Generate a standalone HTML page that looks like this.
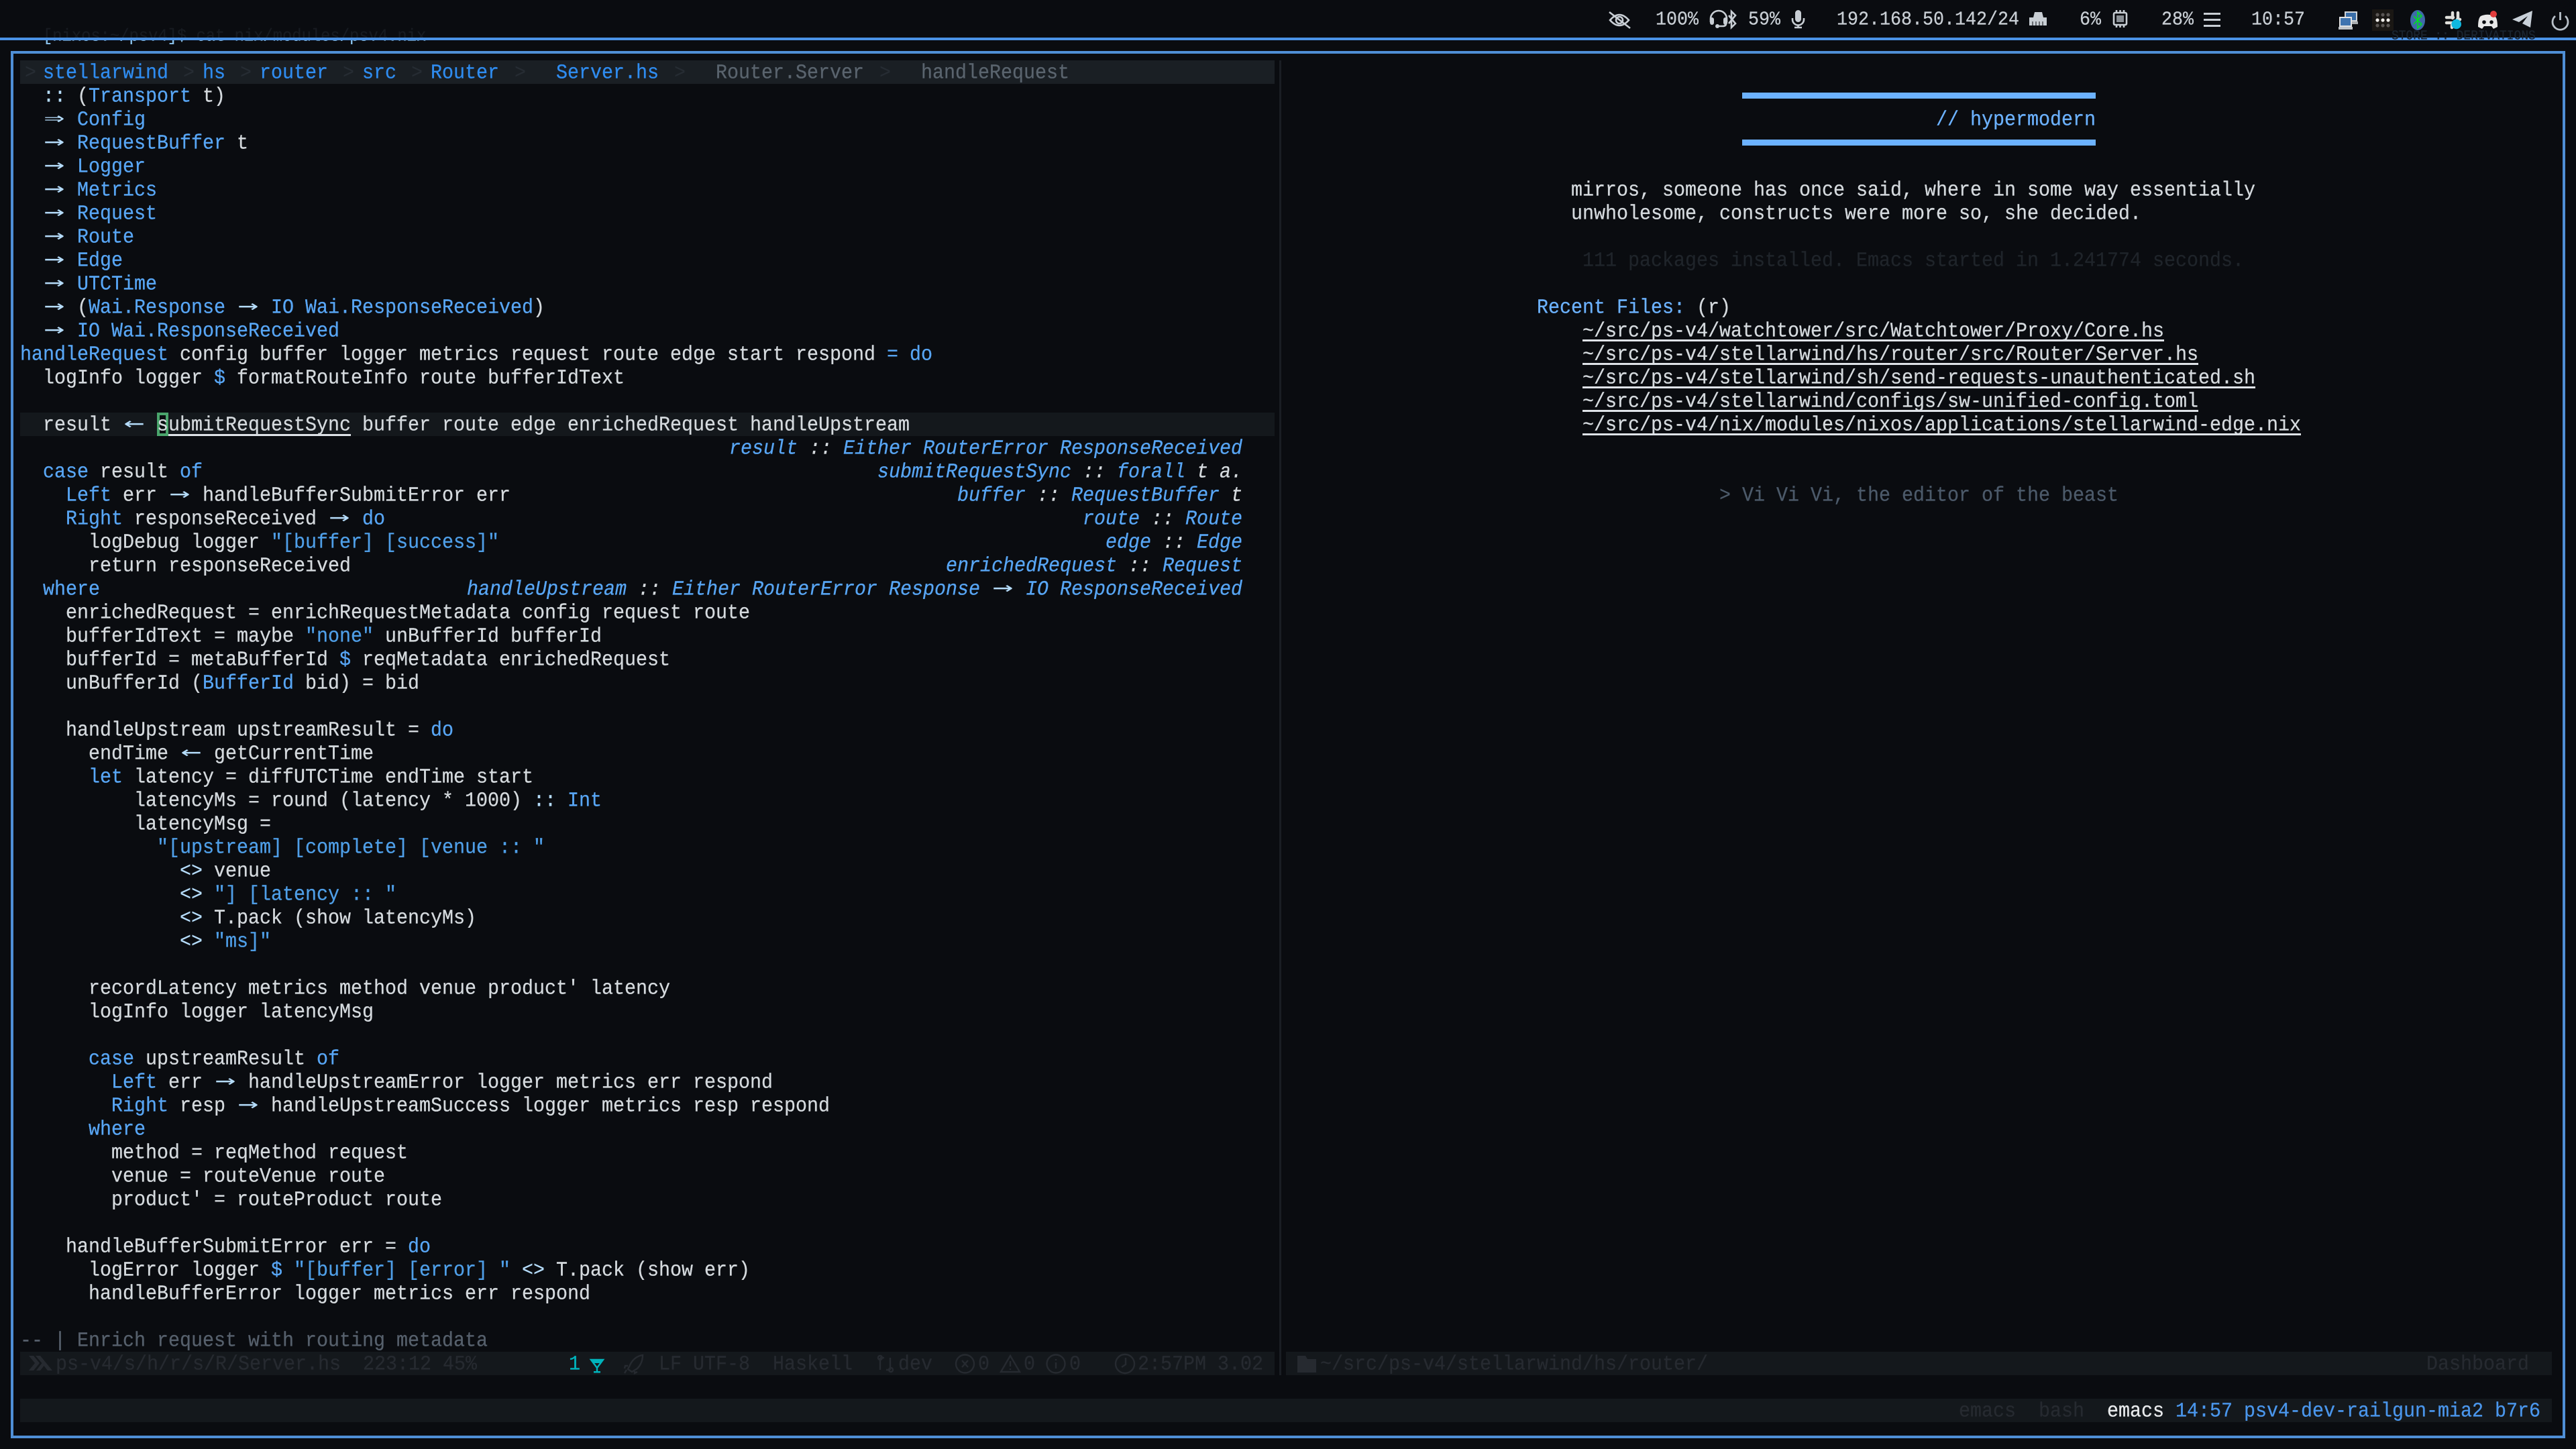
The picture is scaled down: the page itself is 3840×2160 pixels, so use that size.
<!DOCTYPE html>
<html><head><meta charset="utf-8"><style>
html,body{margin:0;padding:0;background:#0a0c10;width:3840px;height:2160px;overflow:hidden}
body{position:relative;font-family:"Liberation Mono","DejaVu Sans Mono",monospace;font-size:28.3333px;line-height:35px;color:#d5dade;text-rendering:geometricPrecision;font-kerning:none;font-variant-ligatures:none;-webkit-text-stroke:.25px currentColor}
.p{position:absolute;white-space:pre;height:35px;line-height:35px;transform:translateY(1px) scaleY(1.08)}
.bx{position:absolute}
.b{color:#58a6f5}
.s{color:#4f9fe8}
.o{color:#b5dcfa}
.a{display:inline-block;width:34px;line-height:0;vertical-align:baseline;text-align:center;font-family:"DejaVu Sans Mono",monospace;transform:translateY(-1px) scaleX(1.8);color:#b5dcfa;font-style:normal;-webkit-text-stroke:0}
#code{position:absolute;left:30px;top:125px;white-space:normal}
#code div{height:35px;white-space:pre;transform:translateY(1px) scaleY(1.08)}
#hint{position:absolute;right:1988px;top:125px;white-space:normal;text-align:right;font-style:italic;color:#58a6f5}
#hint div{height:35px;white-space:pre;transform:translateY(1px) scaleY(1.08)}
#hint i{color:#d5dade}
.dim{color:#262a30}
.crumb{color:#2f8cf0}
.sep{color:#262c33}
.g{color:#5a646e}
.tb{position:absolute;top:13px;height:35px;line-height:35px;font-size:26.6667px;color:#c8ced4;white-space:pre;transform:scaleY(1.08)}
svg{position:absolute;left:0;top:0}
</style></head><body>

<div class="p" style="left:64px;top:36px;font-size:23.8px;color:#171b21">[nixos:~/psv4]$ cat nix/modules/psv4.nix</div>
<div class="bx" style="left:0;top:60px;width:800px;height:6px;overflow:hidden"><div class="p" style="left:64px;top:-24px;font-size:23.8px;color:#8cc4ee">[nixos:~/psv4]$ cat nix/modules/psv4.nix</div></div>
<div class="bx" style="left:0;top:56px;width:3840px;height:4px;background:#4a92e6"></div>
<div class="p" style="left:3565px;top:37px;font-size:17.9px;color:#1b2530;transform:scaleY(1.1)">STORE :: DERIVATIONS</div>

<div class="bx" style="left:16px;top:76px;width:3800px;height:2060px;border:4px solid #4f8fd6"></div>

<div class="tb" style="left:2468px">100%</div>
<div class="tb" style="left:2606px">59%</div>
<div class="tb" style="left:2738px">192.168.50.142/24</div>
<div class="tb" style="left:3100px">6%</div>
<div class="tb" style="left:3222px">28%</div>
<div class="tb" style="left:3356px">10:57</div>

<!-- header -->
<div class="bx" style="left:30px;top:90px;width:1870px;height:35px;background:#1a1f24"></div>
<div class="p crumb" style="left:64px;top:90px">stellarwind</div>
<div class="p crumb" style="left:302px;top:90px">hs</div>
<div class="p crumb" style="left:387px;top:90px">router</div>
<div class="p crumb" style="left:540px;top:90px">src</div>
<div class="p crumb" style="left:642px;top:90px">Router</div>
<div class="p crumb" style="left:829px;top:90px">Server.hs</div>
<div class="p g" style="left:1067px;top:90px">Router.Server</div>
<div class="p g" style="left:1373px;top:90px">handleRequest</div>
<div class="p sep" style="left:37px;top:90px">&gt;</div>
<div class="p sep" style="left:273px;top:90px">&gt;</div>
<div class="p sep" style="left:358px;top:90px">&gt;</div>
<div class="p sep" style="left:511px;top:90px">&gt;</div>
<div class="p sep" style="left:613px;top:90px">&gt;</div>
<div class="p sep" style="left:767px;top:90px">&gt;</div>
<div class="p sep" style="left:1005px;top:90px">&gt;</div>
<div class="p sep" style="left:1311px;top:90px">&gt;</div>

<!-- current line -->
<div class="bx" style="left:30px;top:615px;width:1870px;height:35px;background:#14181c"></div>
<div class="bx" style="left:234px;top:615px;width:17px;height:35px;background:#4aa56c"></div>
<div class="bx" style="left:238px;top:619px;width:9px;height:27px;background:#0a0e10"></div>
<div class="bx" style="left:251px;top:647px;width:272px;height:3px;background:#dfe3e8"></div>

<div id="code">
<div>  <span class="o">::</span> (<span class="b">Transport</span> t)</div>
<div>  <span class="a">⇒</span> <span class="b">Config</span></div>
<div>  <span class="a">→</span> <span class="b">RequestBuffer</span> t</div>
<div>  <span class="a">→</span> <span class="b">Logger</span></div>
<div>  <span class="a">→</span> <span class="b">Metrics</span></div>
<div>  <span class="a">→</span> <span class="b">Request</span></div>
<div>  <span class="a">→</span> <span class="b">Route</span></div>
<div>  <span class="a">→</span> <span class="b">Edge</span></div>
<div>  <span class="a">→</span> <span class="b">UTCTime</span></div>
<div>  <span class="a">→</span> (<span class="b">Wai.Response</span> <span class="a">→</span> <span class="b">IO Wai.ResponseReceived</span>)</div>
<div>  <span class="a">→</span> <span class="b">IO Wai.ResponseReceived</span></div>
<div><span class="b">handleRequest</span> config buffer logger metrics request route edge start respond <span class="b">=</span> <span class="b">do</span></div>
<div>  logInfo logger <span class="b">$</span> formatRouteInfo route bufferIdText</div>
<div> </div>
<div>  result <span class="a">←</span> submitRequestSync buffer route edge enrichedRequest handleUpstream</div>
<div> </div>
<div>  <span class="b">case</span> result <span class="b">of</span></div>
<div>    <span class="b">Left</span> err <span class="a">→</span> handleBufferSubmitError err</div>
<div>    <span class="b">Right</span> responseReceived <span class="a">→</span> <span class="b">do</span></div>
<div>      logDebug logger <span class="s">"[buffer] [success]"</span></div>
<div>      return responseReceived</div>
<div>  <span class="b">where</span></div>
<div>    enrichedRequest = enrichRequestMetadata config request route</div>
<div>    bufferIdText = maybe <span class="s">"none"</span> unBufferId bufferId</div>
<div>    bufferId = metaBufferId <span class="b">$</span> reqMetadata enrichedRequest</div>
<div>    unBufferId (<span class="b">BufferId</span> bid) = bid</div>
<div> </div>
<div>    handleUpstream upstreamResult = <span class="b">do</span></div>
<div>      endTime <span class="a">←</span> getCurrentTime</div>
<div>      <span class="b">let</span> latency = diffUTCTime endTime start</div>
<div>          latencyMs = round (latency * 1000) <span class="o">::</span> <span class="b">Int</span></div>
<div>          latencyMsg =</div>
<div>            <span class="s">"[upstream] [complete] [venue :: "</span></div>
<div>              <span class="o">&lt;&gt;</span> venue</div>
<div>              <span class="o">&lt;&gt;</span> <span class="s">"] [latency :: "</span></div>
<div>              <span class="o">&lt;&gt;</span> T.pack (show latencyMs)</div>
<div>              <span class="o">&lt;&gt;</span> <span class="s">"ms]"</span></div>
<div> </div>
<div>      recordLatency metrics method venue product' latency</div>
<div>      logInfo logger latencyMsg</div>
<div> </div>
<div>      <span class="b">case</span> upstreamResult <span class="b">of</span></div>
<div>        <span class="b">Left</span> err <span class="a">→</span> handleUpstreamError logger metrics err respond</div>
<div>        <span class="b">Right</span> resp <span class="a">→</span> handleUpstreamSuccess logger metrics resp respond</div>
<div>      <span class="b">where</span></div>
<div>        method = reqMethod request</div>
<div>        venue = routeVenue route</div>
<div>        product' = routeProduct route</div>
<div> </div>
<div>    handleBufferSubmitError err = <span class="b">do</span></div>
<div>      logError logger <span class="b">$</span> <span class="s">"[buffer] [error] "</span> <span class="o">&lt;&gt;</span> T.pack (show err)</div>
<div>      handleBufferError logger metrics err respond</div>
<div> </div>
<div style="color:#56606c">-- | Enrich request with routing metadata</div>
</div>

<div id="hint">
<div> </div><div> </div><div> </div><div> </div><div> </div><div> </div><div> </div><div> </div><div> </div><div> </div><div> </div><div> </div><div> </div><div> </div><div> </div>
<div>result <i>::</i> Either RouterError ResponseReceived</div>
<div>submitRequestSync <i>::</i> forall <i>t a.</i></div>
<div>buffer <i>::</i> RequestBuffer <i>t</i></div>
<div>route <i>::</i> Route</div>
<div>edge <i>::</i> Edge</div>
<div>enrichedRequest <i>::</i> Request</div>
<div>handleUpstream <i>::</i> Either RouterError Response <span class="a">→</span> IO ResponseReceived</div>
</div>

<!-- right pane -->
<div class="bx" style="left:1907px;top:90px;width:3px;height:1960px;background:#1a1e23"></div>
<div class="bx" style="left:2597px;top:138px;width:527px;height:9px;background:#6cb2ff"></div>
<div class="bx" style="left:2597px;top:208px;width:527px;height:9px;background:#6cb2ff"></div>
<div class="p" style="left:2886px;top:160px;color:#6cb2ff">// hypermodern</div>
<div class="p" style="left:2342px;top:265px">mirros, someone has once said, where in some way essentially</div>
<div class="p" style="left:2342px;top:300px">unwholesome, constructs were more so, she decided.</div>
<div class="p" style="left:2359px;top:370px;color:#1f242a">111 packages installed. Emacs started in 1.241774 seconds.</div>
<div class="p" style="left:2291px;top:440px"><span style="color:#6cb2ff">Recent Files:</span> (r)</div>
<div class="p" style="left:2359px;top:475px">~/src/ps-v4/watchtower/src/Watchtower/Proxy/Core.hs</div>
<div class="p" style="left:2359px;top:510px">~/src/ps-v4/stellarwind/hs/router/src/Router/Server.hs</div>
<div class="p" style="left:2359px;top:545px">~/src/ps-v4/stellarwind/sh/send-requests-unauthenticated.sh</div>
<div class="p" style="left:2359px;top:580px">~/src/ps-v4/stellarwind/configs/sw-unified-config.toml</div>
<div class="p" style="left:2359px;top:615px">~/src/ps-v4/nix/modules/nixos/applications/stellarwind-edge.nix</div>
<div class="bx" style="left:2359px;top:506px;width:867px;height:3px;background:#dfe3e8"></div>
<div class="bx" style="left:2359px;top:541px;width:918px;height:3px;background:#dfe3e8"></div>
<div class="bx" style="left:2359px;top:576px;width:1003px;height:3px;background:#dfe3e8"></div>
<div class="bx" style="left:2359px;top:611px;width:918px;height:3px;background:#dfe3e8"></div>
<div class="bx" style="left:2359px;top:646px;width:1071px;height:3px;background:#dfe3e8"></div>
<div class="p" style="left:2563px;top:720px;color:#4c5a6a">&gt; Vi Vi Vi, the editor of the beast</div>

<!-- status bars -->
<div class="bx" style="left:30px;top:2015px;width:1870px;height:35px;background:#14181c"></div>
<div class="bx" style="left:1917px;top:2015px;width:1887px;height:35px;background:#14181c"></div>
<div class="bx" style="left:30px;top:2085px;width:3774px;height:35px;background:#14181c"></div>
<div class="p dim" style="left:83px;top:2015px">ps-v4/s/h/r/s/R/Server.hs</div>
<div class="p dim" style="left:541px;top:2015px">223:12 45%</div>
<div class="p" style="left:848px;top:2015px;color:#00b4bc">1</div>
<div class="p dim" style="left:982px;top:2015px">LF UTF-8</div>
<div class="p dim" style="left:1152px;top:2015px">Haskell</div>
<div class="p dim" style="left:1339px;top:2015px">dev</div>
<div class="p dim" style="left:1458px;top:2015px">0</div>
<div class="p dim" style="left:1526px;top:2015px">0</div>
<div class="p dim" style="left:1594px;top:2015px">0</div>
<div class="p dim" style="left:1696px;top:2015px">2:57PM 3.02</div>
<div class="p dim" style="left:1968px;top:2015px">~/src/ps-v4/stellarwind/hs/router/</div>
<div class="p dim" style="left:3617px;top:2015px">Dashboard</div>
<div class="p dim" style="left:2920px;top:2085px">emacs</div>
<div class="p dim" style="left:3039px;top:2085px">bash</div>
<div class="p" style="left:3141px;top:2085px;color:#e8eaec">emacs</div>
<div class="p" style="left:3243px;top:2085px;color:#4a96ec">14:57 psv4-dev-railgun-mia2 b7r6</div>

<svg width="3840" height="2160" viewBox="0 0 3840 2160" fill="none">
<g stroke="#c8ced4" stroke-width="2.6">
<path d="M2400 30Q2414 14 2428 30Q2414 46 2400 30Z"/><circle cx="2414" cy="30" r="5"/><path d="M2399 18L2430 42"/>
<path d="M2550 33V28a12 12 0 0 1 24 0V33"/><path d="M2573 35q0 4-5 4h-7"/>
<path d="M2577 23L2587 35L2581 41V17L2587 23L2577 35"/>
<path d="M2672 27v2a8.5 8.5 0 0 0 17 0v-2M2680.5 38v3M2675 41h11"/>
<rect x="3151" y="19" width="19" height="18" rx="2"/>
<path d="M3155 15v4M3160.5 15v4M3166 15v4M3155 37v4M3160.5 37v4M3166 37v4"/>
</g>
<g fill="#c8ced4">
<rect x="2549" y="26" width="6" height="11" rx="3"/><rect x="2569" y="26" width="6" height="11" rx="3"/><circle cx="2560" cy="39" r="3"/>
<rect x="2676" y="15" width="9" height="18" rx="4.5"/>
<path d="M3033 18h11l2 8h5v12h-26v-12h6z"/>
<rect x="3155" y="23" width="11" height="10" fill="#8a9096"/>
<rect x="3285" y="19" width="25" height="3"/><rect x="3285" y="28" width="25" height="3"/><rect x="3285" y="37" width="25" height="3"/>
</g>
<path d="M3030 32v6M3035 32v6M3040 32v6M3045 32v6" stroke="#0a0c10" stroke-width="1"/>
<rect x="3495" y="17" width="19" height="15" fill="#d0d4d8"/><rect x="3497" y="19" width="15" height="11" fill="#3a6ea8"/>
<rect x="3502" y="32" width="13" height="4" fill="#a8acb0"/>
<rect x="3487" y="25" width="19" height="15" fill="#e0e2e4"/><rect x="3489" y="27" width="15" height="11" fill="#3f74b0"/>
<rect x="3486" y="40" width="21" height="4" fill="#c0c4c8"/>
<rect x="3536" y="14" width="32" height="32" fill="#1a1714"/>
<g fill="#5a5654"><circle cx="3544" cy="22" r="2.6"/><circle cx="3552" cy="22" r="2.6"/><circle cx="3560" cy="22" r="2.6"/><circle cx="3544" cy="38" r="2.6"/><circle cx="3552" cy="38" r="2.6"/><circle cx="3560" cy="38" r="2.6"/></g>
<g fill="#f0eeea"><circle cx="3544" cy="30" r="2.6"/><circle cx="3552" cy="30" r="2.6"/><circle cx="3560" cy="30" r="2.6"/></g>
<ellipse cx="3604" cy="30" rx="11" ry="15" fill="#3f6aa8"/>
<path d="M3598 24L3610 36L3604 42V18L3610 24L3598 36" stroke="#00e020" stroke-width="1.6"/>
<g stroke="#e0e0dc" stroke-width="4.5" stroke-linecap="round"><path d="M3647 26h10M3656 19v8M3664 27v-8M3667 29h-4M3647 34h8M3655 38v3"/></g>
<circle cx="3661.7" cy="36" r="7.3" fill="#10b8e0"/>
<path d="M3698 24q8-4 20-1q5 3 5 17l-6 3l-3-4h-11l-3 4l-6-3q0-13 4-16z" fill="#e8e8e8"/>
<circle cx="3703" cy="33" r="2.8" fill="#0a0c10"/><circle cx="3714" cy="33" r="2.8" fill="#0a0c10"/>
<circle cx="3717" cy="21" r="5" fill="#e03c3c"/>
<path d="M3775 16L3745 29L3755 33L3768 24L3760 35L3772 41Z" fill="#c8d0d8"/>
<path d="M3809 24a11.5 11.5 0 1 0 15 0M3816.5 18v12" stroke="#b8c0c8" stroke-width="2.8"/>
<g fill="#262a30">
<path d="M48 2021h7l9 11-9 11h-7l9-11zM58 2021h7l18 22h-7l-5.500-7-5.500 7h-6l8.500-11z" transform="translate(-5 0)"/>
<path d="M1934 2021h12l3 5h13v20h-28z"/>
</g>
<g stroke="#262a30" stroke-width="2.4">
<path d="M958 2020q-12 2-18 13l-4 8 6 4 8-5q8-8 8-20zM936 2036l-4 0-1 4M946 2044v3l4-2M934 2042l-3 5"/>
<path d="M1312 2024v18M1327 2024v18M1312 2024h6M1327 2042h-6"/><circle cx="1312" cy="2024" r="3"/><circle cx="1328" cy="2042" r="3"/>
<circle cx="1438.500" cy="2033" r="13.500"/><path d="M1434 2028l9 10M1443 2028l-9 10"/>
<path d="M1506 2021L1520 2045H1492Z"/><path d="M1506 2029v8M1506 2040v2"/>
<circle cx="1574" cy="2033" r="13.500"/><path d="M1574 2031v9M1574 2026v2"/>
<circle cx="1677" cy="2033" r="14"/><path d="M1678 2024v10l-6 4"/>
</g>
<path d="M881 2027h18l-9 12zM890 2038v7" stroke="#00b4bc" stroke-width="2.4"/>
<path d="M882 2027h16l-3 5h-10z" fill="#00b4bc"/><rect x="885" y="2044" width="10" height="2.500" fill="#00b4bc"/>
</svg>
</body></html>
